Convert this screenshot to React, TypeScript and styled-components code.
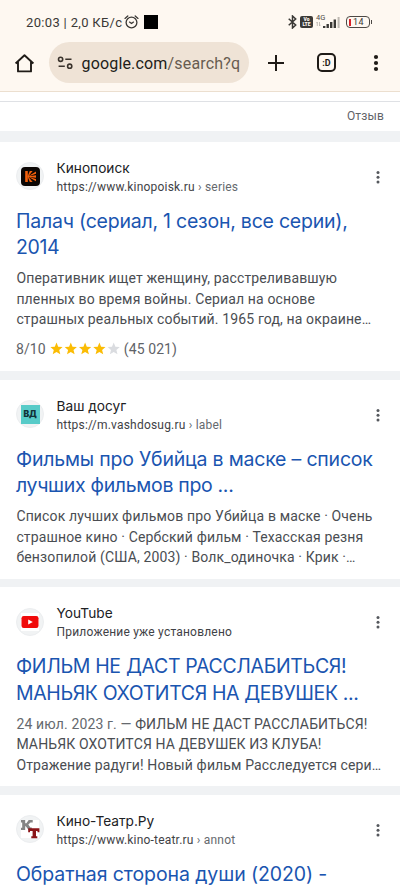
import React from 'react';
import styled, { createGlobalStyle } from 'styled-components';

const Global = createGlobalStyle`
  * { box-sizing: border-box; }
  html, body { margin: 0; padding: 0; background: #fff; }
  body { overflow: hidden; font-family: Roboto, "Noto Sans", sans-serif; }
`;

const Screen = styled.div`
  width: 400px;
  height: 889px;
  overflow: hidden;
  display: flex;
  flex-direction: column;
  background: #f0f2f4;
`;

const BrowserChrome = styled.header`
  height: 92px;
  flex: none;
  background: #fef8f1;
  border-bottom: 1px solid #ecdfcf;
`;

const StatusBar = styled.div`
  height: 42px;
  padding: 2px 27px 0 26px;
  display: flex;
  align-items: center;
  color: #3b3936;
  svg { display: block; flex: none; }
`;

const Clock = styled.span`
  font-size: 13px;
  letter-spacing: 0.33px;
  white-space: nowrap;
  width: 98px;
`;

const RecordSquare = styled.span`
  width: 14px;
  height: 14px;
  margin-left: 5px;
  background: #000;
`;

const StatusIcons = styled.div`
  margin-left: auto;
  display: flex;
  align-items: center;
`;

const Volte = styled.span`
  width: 13px;
  height: 12px;
  margin: 0 3px 0 3px;
  border-radius: 2px;
  background: #3b3936;
  color: #fef8f1;
  display: flex;
  flex-direction: column;
  align-items: center;
  justify-content: center;
  font-size: 5px;
  line-height: 5px;
  font-weight: 900;
`;

const Signal = styled.span`
  width: 25px;
  height: 14px;
  margin-right: 5px;
  display: grid;
  grid-template-columns: 7px 18px;
  grid-template-rows: 6px 8px;
  color: #4c4945;
`;

const NetworkKind = styled.span`
  font-size: 7.5px;
  line-height: 6px;
`;

const SignalBars = styled.svg`
  grid-row: 1 / 3;
  grid-column: 2;
`;

const Battery = styled.span`
  position: relative;
  width: 24px;
  height: 12px;
  margin-right: 3px;
  border: 1.4px solid #4c4945;
  border-radius: 4px;
  display: flex;
  align-items: center;
  padding-left: 1.5px;
  font-size: 9px;
  line-height: 9px;
  letter-spacing: 0.4px;
  &::after {
    content: '';
    position: absolute;
    right: -3px;
    top: 3px;
    width: 1.5px;
    height: 4px;
    background: #4c4945;
  }
`;

const BatteryLevel = styled.span`
  width: 2.5px;
  height: 7px;
  margin-right: 2px;
  background: #d8232a;
`;

const Toolbar = styled.div`
  height: 41px;
  padding: 0 21px 0 13px;
  display: flex;
  align-items: center;
  svg { display: block; flex: none; }
`;

const AddressPill = styled.div`
  width: 200px;
  height: 41px;
  margin: 0 17px 0 13px;
  padding: 0 9px 0 8px;
  border-radius: 21px;
  background: #efe3d6;
  display: flex;
  align-items: center;
`;

const Address = styled.span`
  margin: 1px 0 0 7.5px;
  font-size: 16px;
  letter-spacing: 0.17px;
  white-space: nowrap;
  color: #211d19;
`;

const AddressPath = styled.span`
  color: #675c50;
`;

const TabButton = styled.span`
  width: 19px;
  height: 19px;
  flex: none;
  margin: 0 36.5px 0 31px;
  border: 2px solid #1f1b17;
  border-radius: 5px;
  display: flex;
  align-items: center;
  justify-content: center;
  font-size: 9px;
  font-weight: 700;
  line-height: 10px;
  color: #1f1b17;
`;

const FeedbackStrip = styled.div`
  height: 39px;
  flex: none;
  margin-bottom: 10.5px;
  padding-top: 9px;
  background: #fff;
`;

const Feedback = styled.div`
  height: 30px;
  padding: 0 16px 1px 0;
  border-top: 1px solid #dfe1e5;
  display: flex;
  align-items: center;
  justify-content: flex-end;
  font-size: 12px;
  letter-spacing: 0.15px;
  color: #5f6368;
`;

const Card = styled.article<{ $height: number }>`
  height: ${(p) => p.$height}px;
  flex: none;
  margin-bottom: 8.5px;
  padding: 14px 16px 0;
  background: #fff;
`;

const Source = styled.header`
  height: 40px;
  display: flex;
  align-items: center;
`;

const Favicon = styled.span`
  width: 28px;
  height: 28px;
  margin: 1px 12.5px 0 0;
  border-radius: 50%;
  background: #f1f3f4;
  border: 1px solid #eceef0;
  display: flex;
  align-items: center;
  justify-content: center;
  svg { display: block; }
`;

const Labels = styled.div`
  flex: 1;
  height: 40px;
  display: flex;
  flex-direction: column;
`;

const SiteName = styled.div`
  font: 400 13.7px/22px Inter, sans-serif;
  height: 22px;
  margin-top: 1px;
  color: #202124;
`;

const Url = styled.div`
  font-size: 12px;
  line-height: 16px;
  letter-spacing: 0.2px;
  color: #3f4246;
`;

const Crumb = styled.span`
  color: #65696e;
`;

const MoreIcon = styled.svg`
  display: block;
  margin: 2px 4px 0 0;
`;

const Title = styled.h3`
  margin: 12px 0 0;
  font: 400 19.5px/26.7px Inter, sans-serif;
  color: #1a55b0;
`;

const TitleLine = styled.span<{ $tracking: number }>`
  display: block;
  white-space: pre;
  letter-spacing: ${(p) => p.$tracking}px;
`;

const Snippet = styled.div`
  margin: 7.5px 0 0 0.4px;
  font-size: 14px;
  line-height: 20.5px;
  letter-spacing: 0.138px;
  color: #4a4d52;
`;

const SnippetLine = styled.div`
  white-space: pre;
`;

const Muted = styled.span`
  color: #65696e;
`;

const Rating = styled.div`
  height: 20px;
  margin-top: 9px;
  display: flex;
  align-items: center;
  font-size: 14px;
  letter-spacing: 0.1px;
  color: #5f6368;
`;

const Stars = styled.svg`
  display: block;
  margin: 0 3px 1px 4px;
`;

function KinopoiskMark() {
  return (
    <svg width="19" height="19" viewBox="0 0 19 19">
      <rect width="19" height="19" rx="4" fill="#0b0604" />
      <path d="M4.2 4h2.6v11H4.2z" fill="#f4600c" />
      <path
        d="M6.5 9.4 8.8 4h2.8L7.6 9 15 4.6v2.2L7.8 9.2 15 8.2v2.6L7.8 9.9 15 12v2.2L7.6 10.1l4 4.9H8.8z"
        fill="#f4600c"
      />
    </svg>
  );
}

const DosugMark = styled.span`
  width: 19px;
  height: 19px;
  background: #57cbc8;
  color: #123238;
  display: flex;
  align-items: center;
  justify-content: center;
  font: 900 8.5px/9px Inter, sans-serif;
  letter-spacing: -0.3px;
`;

function YoutubeMark() {
  return (
    <svg width="18" height="18" viewBox="0 0 18 18">
      <rect width="18" height="18" fill="#fff" />
      <rect x="0.5" y="3" width="17" height="12" rx="2.2" fill="#f00a0a" />
      <path d="m7.2 6.5 4.6 2.5-4.6 2.5z" fill="#fff" />
    </svg>
  );
}

function TheatreMark() {
  return (
    <svg width="20" height="20" viewBox="0 0 20 20">
      <rect x="1" y="1" width="18" height="18" fill="#fff" />
      <path
        d="M1 1h4.2v3.2h1.2L8.7 1h4v2.6h-2.2L8.3 5.4l2.1 3h1.4V11H8.6L5.8 7.2h-.6V11H1V8.7h1.2V3.4H1z"
        fill="#858585"
      />
      <path d="M8.2 9.2h11.2v4.1h-1.9v-1.2h-1.5v5.1h1.3v2h-6v-2h1.3v-5.1H10v1.2H8.2z" fill="#8b1518" />
    </svg>
  );
}

const starPath =
  'M6.5 0.6 8.2 4.7 12.6 5 9.2 7.9 10.3 12.2 6.5 9.9 2.7 12.2 3.8 7.9 0.4 5 4.8 4.7z';

type Result = {
  mark: React.ReactNode;
  site: string;
  url: string;
  crumb?: string;
  title: [string, number][];
  snippet: string[];
  date?: string;
  rating?: { score: string; votes: string; filled: number };
  height: number;
};

const results: Result[] = [
  {
    mark: <KinopoiskMark />,
    site: 'Кинопоиск',
    url: 'https://www.kinopoisk.ru',
    crumb: 'series',
    title: [
      ['Палач (сериал, 1 сезон, все серии),', -0.23],
      ['2014', -0.4],
    ],
    snippet: [
      'Оперативник ищет женщину, расстреливавшую',
      'пленных во время войны. Сериал на основе',
      'страшных реальных событий. 1965 год, на окраине…',
    ],
    rating: { score: '8/10', votes: '(45 021)', filled: 4 },
    height: 229.5,
  },
  {
    mark: <DosugMark>ВД</DosugMark>,
    site: 'Ваш досуг',
    url: 'https://m.vashdosug.ru',
    crumb: 'label',
    title: [
      ['Фильмы про Убийца в маске – список', -0.2],
      ['лучших фильмов про ...', -0.32],
    ],
    snippet: [
      'Список лучших фильмов про Убийца в маске · Очень',
      'страшное кино · Сербский фильм · Техасская резня',
      'бензопилой (США, 2003) · Волк_одиночка · Крик ·…',
    ],
    height: 199,
  },
  {
    mark: <YoutubeMark />,
    site: 'YouTube',
    url: 'Приложение уже установлено',
    title: [
      ['ФИЛЬМ НЕ ДАСТ РАССЛАБИТЬСЯ!', -0.33],
      ['МАНЬЯК ОХОТИТСЯ НА ДЕВУШЕК ...', -0.39],
    ],
    date: '24 июл. 2023 г. — ',
    snippet: [
      'ФИЛЬМ НЕ ДАСТ РАССЛАБИТЬСЯ!',
      'МАНЬЯК ОХОТИТСЯ НА ДЕВУШЕК ИЗ КЛУБА!',
      'Отражение радуги! Новый фильм Расследуется сери…',
    ],
    height: 199,
  },
  {
    mark: <TheatreMark />,
    site: 'Кино-Театр.Ру',
    url: 'https://www.kino-teatr.ru',
    crumb: 'annot',
    title: [['Обратная сторона души (2020) -', -0.1]],
    snippet: [],
    height: 199,
  },
];

function ResultCard({ item }: { item: Result }) {
  return (
    <Card $height={item.height}>
      <Source>
        <Favicon>{item.mark}</Favicon>
        <Labels>
          <SiteName>{item.site}</SiteName>
          <Url>
            {item.url}
            {item.crumb && <Crumb> › {item.crumb}</Crumb>}
          </Url>
        </Labels>
        <MoreIcon width="4" height="14" viewBox="0 0 4 14" fill="#55585d">
          <circle cx="2" cy="2.5" r="1.5" />
          <circle cx="2" cy="7.2" r="1.5" />
          <circle cx="2" cy="11.9" r="1.5" />
        </MoreIcon>
      </Source>
      <Title>
        {item.title.map(([text, tracking]) => (
          <TitleLine key={text} $tracking={tracking}>
            {text}
          </TitleLine>
        ))}
      </Title>
      <Snippet>
        {item.snippet.map((line, i) => (
          <SnippetLine key={line}>
            {i === 0 && item.date && <Muted>{item.date}</Muted>}
            {line}
          </SnippetLine>
        ))}
      </Snippet>
      {item.rating && (
        <Rating>
          {item.rating.score}
          <Stars width="71" height="13" viewBox="0 0 71 13">
            {[0, 1, 2, 3, 4].map((n) => (
              <path
                key={n}
                d={starPath}
                transform={`translate(${n * 14.3} 0)`}
                fill={n < item.rating!.filled ? '#fbbc04' : '#dadce0'}
              />
            ))}
          </Stars>
          {item.rating.votes}
        </Rating>
      )}
    </Card>
  );
}

export default function App() {
  return (
    <Screen>
      <Global />
      <BrowserChrome>
        <StatusBar>
          <Clock>20:03 | 2,0 КБ/с</Clock>
          <svg width="15" height="14" viewBox="0 0 15 14" fill="none" stroke="#3b3936" strokeWidth="1.3">
            <circle cx="7.5" cy="7.5" r="5.4" />
            <path d="M1 3.4 3.8 1M14 3.4 11.2 1" strokeLinecap="round" />
            <path d="m5.2 6.8 2.3 1.7 2.3-1.7" />
          </svg>
          <RecordSquare />
          <StatusIcons>
            <svg width="9" height="14" viewBox="0 0 9 14" fill="none" stroke="#3b3936" strokeWidth="1.5">
              <path d="M.7 3.8 7.7 10 4.5 13V1l3.2 3L.7 10.2" />
            </svg>
            <Volte>
              <span>Vo</span>
              <span>LTE</span>
            </Volte>
            <Signal>
              <NetworkKind>4G</NetworkKind>
              <SignalBars width="18" height="14" viewBox="0 0 18 14" fill="#3b3936">
                <rect x="0" y="11" width="2.4" height="2" />
                <rect x="3.5" y="9" width="2.4" height="4" />
                <rect x="7" y="7" width="2.4" height="6" />
                <rect x="10.6" y="4.5" width="2.4" height="8.5" />
                <rect x="14.6" y="2" width="2" height="11" fill="#bdb8b1" />
              </SignalBars>
              <svg width="5" height="6" viewBox="0 0 5 6" fill="none" stroke="#b5afa8" strokeWidth="0.8">
                <path d="M1.3 5V1L.3 2.2M3.5 1v4l1-1.2" />
              </svg>
            </Signal>
            <Battery>
              <BatteryLevel />
              14
            </Battery>
          </StatusIcons>
        </StatusBar>
        <Toolbar>
          <svg width="23" height="22" viewBox="0 0 23 22" fill="none" stroke="#1f1b17" strokeWidth="1.9">
            <path d="M2.6 11.5 11.5 3.2l8.9 8.3M5 10v9.4h13V10" strokeLinejoin="round" />
          </svg>
          <AddressPill>
            <svg width="17" height="14" viewBox="0 0 17 14" fill="none" stroke="#3a332c" strokeWidth="1.6">
              <circle cx="3.6" cy="3.3" r="2.1" />
              <path d="M8.3 3.3h6.2M1.6 10.2h6.2" />
              <circle cx="12.7" cy="10.2" r="2.1" />
            </svg>
            <Address>
              google.com<AddressPath>/search?q</AddressPath>
            </Address>
          </AddressPill>
          <svg width="20" height="20" viewBox="0 0 20 20" stroke="#1f1b17" strokeWidth="2">
            <path d="M10 2v16M2 10h16" />
          </svg>
          <TabButton>:D</TabButton>
          <svg width="6" height="18" viewBox="0 0 6 18" fill="#1f1b17">
            <circle cx="3" cy="3" r="2.1" />
            <circle cx="3" cy="9" r="2.1" />
            <circle cx="3" cy="15" r="2.1" />
          </svg>
        </Toolbar>
      </BrowserChrome>
      <FeedbackStrip>
        <Feedback>Отзыв</Feedback>
      </FeedbackStrip>
      {results.map((item) => (
        <ResultCard key={item.site} item={item} />
      ))}
    </Screen>
  );
}
